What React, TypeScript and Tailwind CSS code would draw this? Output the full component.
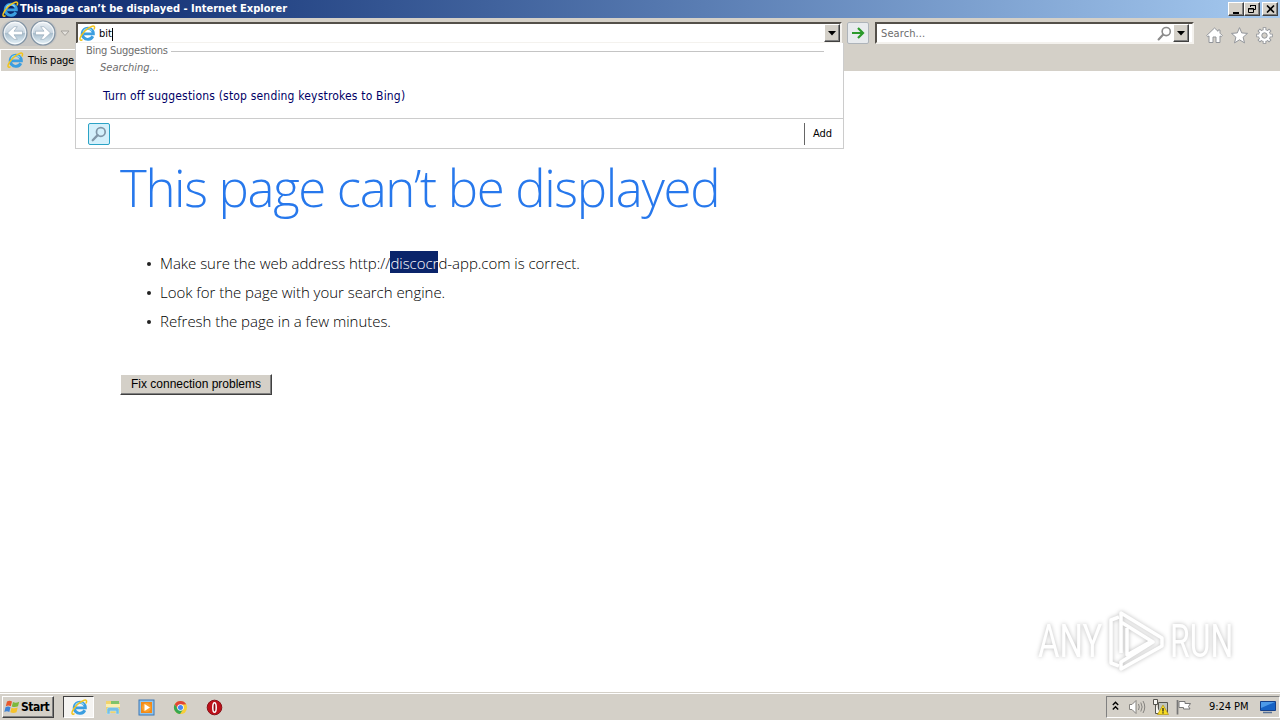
import type { ReactNode } from 'react';

const raised = 'border border-t-white border-l-white border-r-[#404040] border-b-[#404040] bg-[#d4d0c8] shadow-[inset_-1px_-1px_0_#808080]';
const sunken = 'border-2 border-t-[#54504a] border-l-[#54504a] border-r-[#f4f2ee] border-b-[#f4f2ee]';

function IeLogo({ size }: { size: number }) {
  return (
    <svg width={size} height={size} viewBox="0 0 18 18" fill="none" className="shrink-0">
      <path d="M14.600 11.900a5.900 5.900 0 1 1 .6-2.500H5.200" stroke="#3b9ee0" strokeWidth="3.100" />
      <path d="M4.300 7.200a5.400 5.400 0 0 1 9.300-1.300" stroke="#8fd8f8" strokeWidth="1.2" />
      <path d="M3.2 15.8C1.4 16.9.5 15.6 1.5 13 3.2 8.6 9 2.7 14 1.3c2.400-.6 3 .9 2 2.900" stroke="#f2c41c" strokeWidth="1.600" strokeLinecap="round" />
    </svg>
  );
}

function DropArrow() {
  return (
    <svg width="8" height="5" viewBox="0 0 8 5"><path d="M0 0h8L4 4.500z" fill="#000" /></svg>
  );
}

function NavButton({ flip = false }: { flip?: boolean }) {
  return (
    <svg width="26" height="26" viewBox="0 0 26 26" className="shrink-0">
      <defs>
        <linearGradient id={flip ? 'navF' : 'navB'} x1="0" y1="0" x2="0" y2="1">
          <stop offset="0" stopColor="#eef2f6" />
          <stop offset="0.48" stopColor="#c8d5e0" />
          <stop offset="0.52" stopColor="#a9becd" />
          <stop offset="1" stopColor="#e9f5fb" />
        </linearGradient>
      </defs>
      <circle cx="13" cy="13" r="12" fill={flip ? 'url(#navF)' : 'url(#navB)'} stroke="#8293a3" strokeWidth="1.2" />
      <circle cx="13" cy="13" r="10.700" fill="none" stroke="#fff" strokeWidth="1" opacity="0.8" />
      <path
        transform={flip ? 'translate(26 0) scale(-1 1)' : undefined}
        d="M5.500 13l6.600-6.300h3.200L12 11.200h8.500v3.600H12l3.300 4.500h-3.200z"
        fill="#fff"
        stroke="#91a5b5"
        strokeWidth="0.600"
      />
    </svg>
  );
}

function Magnifier({ stroke, size }: { stroke: string; size: number }) {
  return (
    <svg width={size} height={size} viewBox="0 0 14 14" fill="none" stroke={stroke}>
      <circle cx="8.600" cy="5.200" r="3.800" strokeWidth="1.500" />
      <path d="M5.800 8L1.500 12.500" strokeWidth="2" strokeLinecap="round" />
    </svg>
  );
}

function WindowButton({ children }: { children: ReactNode }) {
  return <button type="button" className={`flex h-[14px] w-4 items-center justify-center ${raised}`}>{children}</button>;
}

function TitleBar() {
  return (
    <header className="flex h-[18px] shrink-0 items-center bg-linear-to-r from-[#0a246a] to-[#a6caf0] pr-[2px] pl-[2px]">
      <IeLogo size={17} />
      <h1 className="ml-px grow whitespace-nowrap pt-px text-[11px] font-bold tracking-[0.01px] text-white">This page can’t be displayed - Internet Explorer</h1>
      <WindowButton><svg width="10" height="9" viewBox="0 0 10 9"><path d="M2 7h6v2H2z" /></svg></WindowButton>
      <WindowButton><svg width="10" height="10" viewBox="0 0 10 10" fill="none" stroke="#000"><path d="M3.500 3V1.500h5v4H7M3 1.500h6M1.500 4.500h5v4h-5zM1 5h6" /></svg></WindowButton>
      <div className="w-[2px]" />
      <WindowButton><svg width="9" height="8" viewBox="0 0 9 8" stroke="#000" strokeWidth="1.600"><path d="M1 .5l7 7M8 .5l-7 7" /></svg></WindowButton>
    </header>
  );
}

function SuggestionPanel() {
  return (
    <div className="absolute top-[43px] left-[75px] z-10 flex h-[106px] w-[769px] flex-col border border-t-0 border-[#ccc] bg-white">
      <div className="flex h-[17px] items-center pr-[19px] pl-[10px] text-[11px] text-[#6d6d6d]">
        <span className="w-[82px] whitespace-nowrap tracking-[-0.25px]">Bing Suggestions</span>
        <span className="ml-[3px] h-px grow bg-[#c4c4c4]" />
      </div>
      <div className="pl-6 text-[11px] leading-[16px] text-[#6d6d6d] italic">Searching...</div>
      <div className="mt-[11px] whitespace-nowrap pl-[27px] text-[12px] leading-[18px] tracking-[0.18px] text-[#000066]">Turn off suggestions (stop sending keystrokes to Bing)</div>
      <div className="mt-auto flex h-[30px] items-center border-t border-[#ccc] pl-3">
        <div className="flex size-[22px] items-center justify-center rounded-[2px] border border-[#2ba3c6] bg-[#d4f0fb]"><Magnifier size={16} stroke="#8197a8" /></div>
        <div className="ml-auto flex h-[22px] w-[39px] items-center border-l border-[#666] pt-[2px] pl-[8px] text-[11px] text-black">Add</div>
      </div>
    </div>
  );
}

function Toolbar() {
  return (
    <div className="flex h-[53px] shrink-0 flex-col bg-[#d4d0c8]">
      <div className="flex h-[31px] items-start pt-[4px]">
        <div className="-mt-[2px] flex h-[26px] w-[57px] shrink-0 gap-[2px] rounded-full bg-[#c6c5c3] pl-[2px]">
          <NavButton />
          <NavButton flip />
        </div>
        <svg width="10" height="7" viewBox="0 0 10 7" className="mt-[8px] ml-[3px] shrink-0"><path d="M1 1h8L5 5.500z" fill="#e4e2dd" stroke="#a5a29d" /></svg>
        <div className={`ml-[6px] flex h-[22px] w-[766px] shrink-0 items-center bg-white pl-px ${sunken}`}>
          <IeLogo size={17} />
          <span className="ml-[3px] pt-[3px] text-[11px] text-black">bit</span>
          <span className="mt-[2px] h-[13px] w-px bg-black" />
          <button type="button" className={`ml-auto flex h-[18px] w-[16px] items-center justify-center ${raised}`}><DropArrow /></button>
        </div>
        <button type="button" className="ml-[5px] flex size-[22px] shrink-0 items-center justify-center rounded-[2px] border border-[#aeb4ba] bg-[#e8ebee]">
          <svg width="14" height="12" viewBox="0 0 14 12" fill="none" stroke="#2b9a2b" strokeWidth="2.200"><path d="M1 6h10.500M7 1l5 5-5 5" /></svg>
        </button>
        <div className={`ml-[6px] flex h-[22px] w-[319px] shrink-0 items-center bg-white pr-[3px] pl-[4px] ${sunken}`}>
          <span className="grow pt-[3px] text-[11px] tracking-[0.1px] text-[#6d6d6d]">Search...</span>
          <Magnifier size={15} stroke="#8b8b8b" />
          <button type="button" className={`ml-[1px] flex h-[18px] w-[16px] items-center justify-center ${raised}`}><DropArrow /></button>
        </div>
        <div className="mt-[5px] ml-[12px] flex items-center gap-[8px]">
          <svg width="17" height="17" viewBox="0 0 17 17" fill="#fff" stroke="#92959a" strokeLinejoin="round"><path d="M8.500 1L12 4.300V3h2v3.200l2.300 2.300-1 1.200-1.300-.8v6.600h-4V10H7v5.500H3V8.900l-1.300.8-1-1.200z" /></svg>
          <svg width="17" height="17" viewBox="0 0 17 17" fill="#fff" stroke="#92959a" strokeLinejoin="round"><path d="M8.500.6l2.200 5.300 5.800.5-4.400 3.800 1.400 5.700-5-3.100-5 3.100 1.400-5.700L.5 6.400l5.800-.5z" /></svg>
          <svg width="17" height="17" viewBox="0 0 17 17" fill="none">
            <g stroke="#92959a" strokeWidth="3.600"><path d="M8.500.3v16.400M.3 8.500h16.400M2.700 2.700l11.600 11.600M14.300 2.700L2.700 14.300" /></g>
            <circle cx="8.500" cy="8.500" r="6.300" fill="#92959a" />
            <g stroke="#fff" strokeWidth="1.800"><path d="M8.500 1.100v14.800M1.100 8.500h14.800M3.300 3.300l10.400 10.400M13.700 3.300L3.300 13.700" /></g>
            <circle cx="8.500" cy="8.500" r="5.500" fill="#fff" />
            <circle cx="8.500" cy="8.500" r="2.700" fill="#d4d0c8" stroke="#92959a" />
          </svg>
        </div>
      </div>
      <div className="flex h-[22px] w-[75px] items-center overflow-hidden border-t border-l border-white pl-[6px]">
        <IeLogo size={17} />
        <span className="ml-[4px] whitespace-nowrap pt-px text-[11px] tracking-[-0.25px] text-black">This page</span>
      </div>
    </div>
  );
}

function ErrorPage() {
  return (
    <main className="relative grow bg-white pl-[120px] font-['Open_Sans',sans-serif] [font-stretch:normal]">
      <h2 className="h-[178px] whitespace-nowrap pt-[82px] text-[51px] leading-[68px] font-light tracking-[-1.37px] text-[#2778ec]">This page can’t be displayed</h2>
      <ul className="text-[15px] leading-[29px] font-light tracking-[-0.03px] text-black">
        {[
          <>Make sure the web address http://<mark className="bg-[#0a246a] pt-[2px] text-white">discocr</mark>d-app.com is correct.</>,
          'Look for the page with your search engine.',
          'Refresh the page in a few minutes.',
        ].map((item, index) => (
          <li key={index} className="flex h-[29px] items-center whitespace-nowrap pl-[27px]">
            <span className="mt-px mr-[9px] size-1 rounded-full bg-[#222]" />
            <span>{item}</span>
          </li>
        ))}
      </ul>
      <button type="button" className={`mt-[38px] flex h-[21px] w-[152px] items-center justify-center whitespace-nowrap pb-[2px] font-['Liberation_Sans',Arial,sans-serif] text-[12px] text-black ${raised}`}>Fix connection problems</button>
    </main>
  );
}

function Watermark() {
  return (
    <div className="absolute top-[606px] left-[1038px] flex h-[68px] w-[196px] items-center justify-between pt-[2px] font-['Roboto',sans-serif] text-[47px] text-white [font-stretch:normal] [filter:drop-shadow(0_0_2px_#bbb)]">
      <span className="w-[64px] origin-left scale-x-[0.7]">ANY</span>
      <svg width="58" height="64" viewBox="0 0 58 64" fill="none" stroke="#fff" strokeWidth="3.500" strokeLinejoin="round" className="shrink-0">
        <path d="M12 8L4 11v43l8 3" />
        <path d="M14 44V4l41 25v8L14 60v-7l32-20-32-20" />
        <path d="M20 19v27l23-13" />
      </svg>
      <span className="w-[64px] origin-left scale-x-[0.68]">RUN</span>
    </div>
  );
}

function Taskbar() {
  return (
    <footer className="flex h-[28px] shrink-0 items-center border-t border-[#d4d0c8] bg-[#d4d0c8] pt-px shadow-[inset_0_1px_0_#fff]">
      <button type="button" className={`ml-[2px] flex h-[22px] w-[52px] items-center pl-px ${raised}`}>
        <svg width="17" height="16" viewBox="0 0 17 16" className="shrink-0">
          <path d="M3 2.500c2-1.200 3.500-1 5 0L6.800 7.200c-1.700-.9-3.200-.9-5 0z" fill="#e8582b" />
          <path d="M9 3c1.800 1 3.700 1 6.200-.3L14 7.300c-2 1-4.200 1-6.200.2z" fill="#7cb83c" />
          <path d="M1.500 8.200c1.800-.9 3.300-.9 5 0l-1.200 4.700c-1.600-.9-3.200-.9-5 0z" fill="#3f83d6" />
          <path d="M7.500 8.700c2 .8 4 .8 6.200-.2l-1.200 4.800c-2.200 1-4.200.9-6.200 0z" fill="#f6c22c" />
        </svg>
        <span className="text-[12px] font-bold tracking-[-0.5px] text-black">Start</span>
      </button>
      <div className="ml-[9px] flex h-[22px] w-[31px] items-center justify-center border border-t-[#404040] border-l-[#404040] border-r-white border-b-white bg-[#f5f4f2] pl-px"><IeLogo size={17} /></div>
      <svg width="16" height="16" viewBox="0 0 16 16" className="ml-[11px]">
        <path d="M1 2h5l1 2h8v10H1z" fill="#f1d36c" /><path d="M1 5h14v3H1z" fill="#fbefaf" /><path d="M6 2h8v3H6z" fill="#7fc36a" />
        <path d="M2 15V10.500Q2 8.500 4 8.500h8q2 0 2 2V15h-3v-3H5v3z" fill="#75bfe6" stroke="#b9e3f6" strokeWidth="0.600" />
      </svg>
      <svg width="17" height="17" viewBox="0 0 17 17" className="ml-[17px]">
        <rect x="1" y="1" width="15" height="15" fill="#8fc5ef" stroke="#3d77b4" /><rect x="3" y="3" width="11" height="11" fill="#f28a18" /><circle cx="8.500" cy="8.500" r="4.600" fill="#f9a12e" /><path d="M6.500 5l5.500 3.500L6.500 12z" fill="#fff" />
      </svg>
      <svg width="15" height="15" viewBox="0 0 16 16" className="ml-[18px]">
        <circle cx="8" cy="8" r="7" fill="#f7ce39" /><path d="M1.900 4.500A7 7 0 0 1 14.100 4.500L8 5 5 9.700z" fill="#e14437" /><path d="M1.900 4.500A7 7 0 0 0 7.500 15L11 9.700 5 9.700z" fill="#36a852" /><circle cx="8" cy="8" r="3.500" fill="#fff" /><circle cx="8" cy="8" r="2.700" fill="#4587f3" />
      </svg>
      <svg width="17" height="17" viewBox="0 0 17 17" className="ml-[18px]">
        <circle cx="8.500" cy="8.500" r="7.300" fill="#be1019" stroke="#861018" /><ellipse cx="8.500" cy="8.500" rx="1.700" ry="4.800" fill="#8b0b13" stroke="#fff" strokeWidth="1.500" />
      </svg>
      <div className="ml-auto flex h-[22px] w-[174px] items-center border border-t-[#808080] border-l-[#808080] border-r-white border-b-white pl-[5px]">
        <svg width="7" height="10" viewBox="0 0 7 10" fill="none" stroke="#000" strokeWidth="1.400" className="mb-[2px]"><path d="M.8 4l2.700-2.700L6.200 4M.8 8.500l2.700-2.700 2.700 2.700" /></svg>
        <svg width="18" height="16" viewBox="0 0 18 16" fill="none" stroke="#85837f" className="ml-[9px]"><path d="M1.500 5.500H4l4-4v13l-4-4H1.500z" fill="#fff" /><path d="M10.500 5q1.500 3 0 6M12.800 3.500q2.700 4.500 0 9M15 2q3.500 6 0 12" /></svg>
        <svg width="17" height="16" viewBox="0 0 17 16" className="ml-[6px]">
          <path d="M6.500 3.500h9v10h-9z" fill="#bfc4bd" stroke="#55544f" /><path d="M1.500.5h4v5h-4zM3.500 5.500v9h5" fill="#f7f7f3" stroke="#55544f" /><path d="M11 6l5.500 9.500h-11z" fill="#f7dc22" stroke="#b59510" strokeWidth="0.700" /><path d="M11 9v3.500M11 13.200v1.300" stroke="#222" strokeWidth="1.300" />
        </svg>
        <svg width="17" height="16" viewBox="0 0 17 16" className="ml-[6px]"><path d="M2.500 1v14.500" stroke="#777" strokeWidth="1.700" /><path d="M4 2.500h6v2h5.500l-2 3 1.500 2.500H8.500v-1.500H4z" fill="#fff" stroke="#777" /></svg>
        <span className="ml-[17px] w-[41px] whitespace-nowrap pt-px text-[11px] tracking-[-0.05px] text-black">9:24 PM</span>
        <svg width="16" height="14" viewBox="0 0 16 14" className="ml-auto mr-[3px]"><path d="M.5 1.500h15v9H.5z" fill="#1763c5" stroke="#15408a" /><path d="M1 2h14L1 8z" fill="#4d9ae8" /><path d="M3 12.500h9" stroke="#587296" strokeWidth="1.500" /></svg>
      </div>
    </footer>
  );
}

export default function App() {
  return (
    <div className="relative flex h-[720px] w-[1280px] flex-col overflow-hidden bg-white font-['DejaVu_Sans_Condensed','DejaVu_Sans',sans-serif] [font-stretch:condensed]">
      <TitleBar />
      <Toolbar />
      <ErrorPage />
      <Taskbar />
      <SuggestionPanel />
      <Watermark />
    </div>
  );
}
